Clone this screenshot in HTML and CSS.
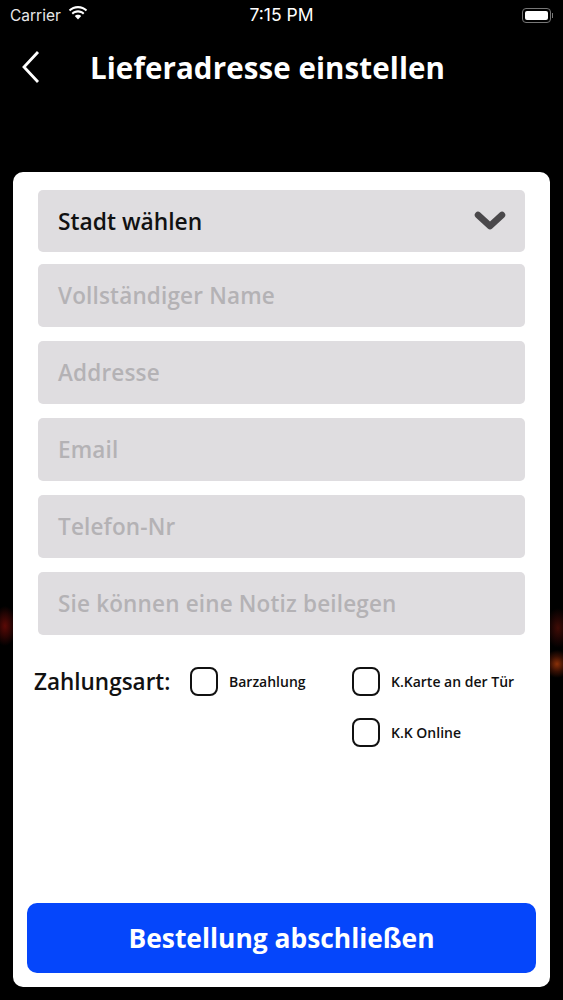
FILE: index.html
```html
<!DOCTYPE html>
<html lang="de">
<head>
<meta charset="utf-8">
<title>Lieferadresse einstellen</title>
<link rel="stylesheet" href="styles.css">
</head>
<body>
<div class="screen">
  <div class="status">
    <div class="status-left">
      <span>Carrier</span>
      <svg class="wifi" width="20" height="15" viewBox="0 0 20 15"><path d="M10 2.200c3 0 5.700 1.100 7.800 3l1.400-1.500C16.800 1.400 13.500 0 10 0S3.200 1.400.8 3.700l1.400 1.500c2.100-1.900 4.800-3 7.800-3z" fill="#fff"/><path d="M10 6.500c1.900 0 3.600.7 5 1.900l1.400-1.500C14.700 5.300 12.400 4.300 10 4.300s-4.700 1-6.400 2.600L5 8.400c1.400-1.200 3.100-1.900 5-1.900z" fill="#fff"/><path d="M10 8.700c-1.300 0-2.400.5-3.200 1.300l3.200 3.400 3.200-3.400c-.8-.8-1.900-1.300-3.200-1.300z" fill="#fff"/></svg>
    </div>
    <div class="status-time">7:15 PM</div>
    <div class="status-right">
      <div class="battery"><div class="battery-fill"></div></div>
      <div class="battery-cap"></div>
    </div>
  </div>
  <div class="nav">
    <svg class="back" width="20" height="36" viewBox="0 0 20 36"><path d="M17 3 3 18l14 15" fill="none" stroke="#fff" stroke-width="2.800"/></svg>
    <h1 class="title">Lieferadresse einstellen</h1>
  </div>
  <main class="card">
    <div class="fields">
      <div class="field select">
        <span>Stadt wählen</span>
        <svg class="chevron" width="32" height="20" viewBox="0 0 32 20"><path d="M4 4l12 11L28 4" fill="none" stroke="#4a484b" stroke-width="6.500" stroke-linecap="round" stroke-linejoin="round"/></svg>
      </div>
      <div class="field">Vollständiger Name</div>
      <div class="field">Addresse</div>
      <div class="field">Email</div>
      <div class="field">Telefon-Nr</div>
      <div class="field">Sie können eine Notiz beilegen</div>
    </div>
    <div class="payment">
      <div class="pay-label">Zahlungsart:</div>
      <div class="pay-col first">
        <div class="option"><span class="check"></span><span>Barzahlung</span></div>
      </div>
      <div class="pay-col">
        <div class="option"><span class="check"></span><span>K.Karte an der Tür</span></div>
        <div class="option"><span class="check"></span><span>K.K Online</span></div>
      </div>
    </div>
    <button class="submit">Bestellung abschließen</button>
  </main>
</div>
</body>
</html>
```
FILE: styles.css
```css
* { box-sizing: border-box; }
html, body { margin: 0; padding: 0; background: #000; }
body { font-family: "Open Sans", "Noto Sans", sans-serif; }
.screen {
  width: 563px;
  height: 1000px;
  display: flex;
  flex-direction: column;
  overflow: hidden;
  background-color: #000;
  background-image:
    radial-gradient(ellipse 12px 20px at 5px 626px, #5c0a06 0%, rgba(70,8,6,.6) 55%, rgba(0,0,0,0) 100%),
    radial-gradient(ellipse 12px 20px at 558px 628px, #400c06 0%, rgba(50,8,6,.5) 60%, rgba(0,0,0,0) 100%),
    radial-gradient(ellipse 13px 14px at 557px 664px, #8a3008 0%, rgba(90,26,6,.6) 55%, rgba(0,0,0,0) 100%);
}
.status {
  height: 30px;
  padding: 0 10px;
  display: grid;
  grid-template-columns: 1fr auto 1fr;
  align-items: center;
  color: #fff;
  font-family: Inter, Roboto, sans-serif;
  font-size: 15.500px;
}
.status-left { display: flex; align-items: center; gap: 7px; color: #e8e8e8; }
.wifi { margin-top: -4px; }
.status-time { font-size: 17.500px; font-weight: 400; margin-top: -1px; }
.status-right { display: flex; justify-content: flex-end; align-items: center; gap: 1px; }
.battery {
  width: 29px;
  height: 15px;
  border: 1px solid #777;
  border-radius: 4px;
  padding: 2px;
}
.battery-fill { width: 100%; height: 100%; background: #fff; border-radius: 2px; }
.battery-cap { width: 1px; height: 5px; background: #777; }
.nav {
  height: 76px;
  padding: 0 0 2px 21px;
  display: flex;
  align-items: center;
  gap: 49px;
}
.back { flex: none; }
.title {
  margin: 0;
  color: #fff;
  font-size: 29.500px;
  font-weight: 700;
  letter-spacing: .1px;
  white-space: nowrap;
}
.card {
  margin: 66px 13px 0;
  height: 815px;
  background: #fff;
  border-radius: 10px;
  padding: 18px 14px 14px;
  display: flex;
  flex-direction: column;
}
.fields {
  margin: 0 11px;
  display: flex;
  flex-direction: column;
  gap: 14px;
}
.field {
  height: 63px;
  background: #dfdde0;
  border-radius: 5px;
  padding: 0 20px;
  display: flex;
  align-items: center;
  font-size: 22.500px;
  font-weight: 600;
  letter-spacing: .17px;
  color: #b4b2b5;
}
.field.select {
  height: 62px;
  margin-bottom: -2px;
  justify-content: space-between;
  color: #111;
  font-size: 22.800px;
  letter-spacing: 0;
  padding-right: 19px;
}
.chevron { margin-top: 0; }
.payment {
  margin-top: 32px;
  margin-left: 7px;
  display: flex;
  align-items: flex-start;
  font-size: 14px;
  font-weight: 600;
  color: #111;
}
.pay-label {
  width: 150px;
  flex: none;
  margin-right: 6px;
  font-size: 22.500px;
  font-weight: 600;
  line-height: 30px;
}
.pay-col { display: flex; flex-direction: column; gap: 22px; }
.pay-col.first { width: 162px; flex: none; }
.option { display: flex; align-items: center; gap: 11px; height: 29px; white-space: nowrap; }
.check {
  width: 28px;
  height: 29px;
  flex: none;
  border: 2px solid #111;
  border-radius: 8px;
}
.submit {
  margin-top: auto;
  width: 509px;
  height: 70px;
  border: 0;
  border-radius: 10px;
  background: #0546fb;
  color: #fff;
  font-family: inherit;
  font-size: 26.400px;
  font-weight: 700;
}
```
